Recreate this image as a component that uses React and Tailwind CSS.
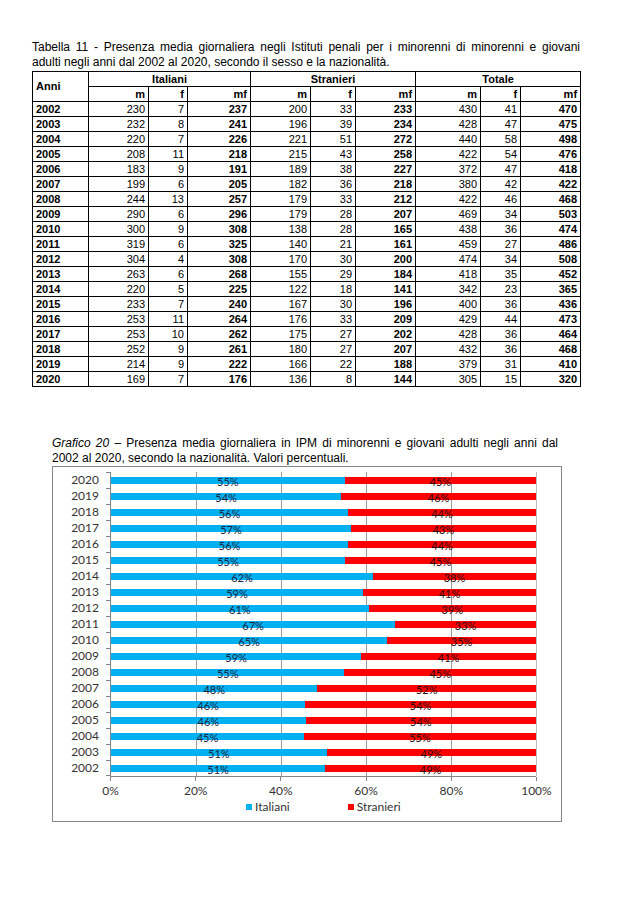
import React from "react";

const rows = [
  [2002, 230, 7, 237, 200, 33, 233, 430, 41, 470],
  [2003, 232, 8, 241, 196, 39, 234, 428, 47, 475],
  [2004, 220, 7, 226, 221, 51, 272, 440, 58, 498],
  [2005, 208, 11, 218, 215, 43, 258, 422, 54, 476],
  [2006, 183, 9, 191, 189, 38, 227, 372, 47, 418],
  [2007, 199, 6, 205, 182, 36, 218, 380, 42, 422],
  [2008, 244, 13, 257, 179, 33, 212, 422, 46, 468],
  [2009, 290, 6, 296, 179, 28, 207, 469, 34, 503],
  [2010, 300, 9, 308, 138, 28, 165, 438, 36, 474],
  [2011, 319, 6, 325, 140, 21, 161, 459, 27, 486],
  [2012, 304, 4, 308, 170, 30, 200, 474, 34, 508],
  [2013, 263, 6, 268, 155, 29, 184, 418, 35, 452],
  [2014, 220, 5, 225, 122, 18, 141, 342, 23, 365],
  [2015, 233, 7, 240, 167, 30, 196, 400, 36, 436],
  [2016, 253, 11, 264, 176, 33, 209, 429, 44, 473],
  [2017, 253, 10, 262, 175, 27, 202, 428, 36, 464],
  [2018, 252, 9, 261, 180, 27, 207, 432, 36, 468],
  [2019, 214, 9, 222, 166, 22, 188, 379, 31, 410],
  [2020, 169, 7, 176, 136, 8, 144, 305, 15, 320],
];

const labels = {
  2020: [55, 45], 2019: [54, 46], 2018: [56, 44], 2017: [57, 43], 2016: [56, 44],
  2015: [55, 45], 2014: [62, 38], 2013: [59, 41], 2012: [61, 39], 2011: [67, 33],
  2010: [65, 35], 2009: [59, 41], 2008: [55, 45], 2007: [48, 52], 2006: [46, 54],
  2005: [46, 54], 2004: [45, 55], 2003: [51, 49], 2002: [51, 49],
};

const colW = [56, 60, 39, 63, 60, 45, 60, 65, 40, 60];
const bold = [true, false, false, true, false, false, true, false, false, true];

function Table() {
  return (
    <table className="border-collapse table-fixed w-[548px] text-[11px] leading-[13px] text-black">
      <colgroup>
        {colW.map((w, i) => (
          <col key={i} style={{ width: w }} />
        ))}
      </colgroup>
      <thead>
        <tr className="h-[15px]">
          <th rowSpan={2} className="border border-black text-left font-bold px-[3px] py-0 align-middle">
            Anni
          </th>
          <th colSpan={3} className="border border-black text-center font-bold p-0">Italiani</th>
          <th colSpan={3} className="border border-black text-center font-bold p-0">Stranieri</th>
          <th colSpan={3} className="border border-black text-center font-bold p-0">Totale</th>
        </tr>
        <tr className="h-[15px]">
          {["m", "f", "mf", "m", "f", "mf", "m", "f", "mf"].map((h, i) => (
            <th key={i} className="border border-black text-right font-bold pr-[3px] py-0">
              {h}
            </th>
          ))}
        </tr>
      </thead>
      <tbody>
        {rows.map((r) => (
          <tr key={r[0]} className="h-[15px]">
            {r.map((v, i) => (
              <td
                key={i}
                className={
                  i === 0
                    ? "border border-black text-left font-bold px-[3px] py-0"
                    : bold[i]
                    ? "border border-black text-right font-bold pr-[3px] py-0"
                    : "border border-black text-right font-normal pr-[3px] py-0"
                }
              >
                {v}
              </td>
            ))}
          </tr>
        ))}
      </tbody>
    </table>
  );
}

function Chart() {
  const data = [...rows].reverse();
  return (
    <div className="w-[510px] h-[356px] border border-[#868686] bg-white pt-[5px] font-['Lato',sans-serif] text-[#262626]">
      <div className="flex">
        <div className="w-[57px] flex flex-col">
          {data.map((r, idx) => (
            <div key={r[0]} className="flex h-[16px]">
              <div className="flex-1 text-right pr-[7px] text-[12px] leading-[16px] text-[#333]">{r[0]}</div>
              <div
                className={
                  idx === data.length - 1
                    ? "w-[4px] h-full border-t border-b border-[#868686]"
                    : "w-[4px] h-full border-t border-[#868686]"
                }
              />
            </div>
          ))}
        </div>
        <div className="flex flex-col">
          <div className="relative w-[426px] h-[305px] border-l border-b border-[#868686]">
            <div className="absolute top-0 bottom-0 left-[85px] w-px bg-[#9a9a9a]" />
            <div className="absolute top-0 bottom-0 left-[170px] w-px bg-[#9a9a9a]" />
            <div className="absolute top-0 bottom-0 left-[255px] w-px bg-[#9a9a9a]" />
            <div className="absolute top-0 bottom-0 left-[340px] w-px bg-[#9a9a9a]" />
            <div className="absolute top-0 bottom-0 left-[425px] w-px bg-[#bdbdbd]" />
            <div className="relative flex flex-col">
              {data.map((r) => {
                const p = (r[3] / r[9]) * 100;
                const [li, ls] = labels[r[0]];
                return (
                  <div key={r[0]} className="h-[16px] flex items-center">
                    <div
                      className="h-[7px] bg-[#00b0f0] flex items-center justify-center"
                      style={{ width: `${p}%` }}
                    >
                      <span className="text-[11px] leading-none text-[#1c2540] whitespace-nowrap translate-y-[1px]">
                        {li}%
                      </span>
                    </div>
                    <div className="h-[7px] flex-1 bg-[#ff0000] flex items-center justify-center">
                      <span className="text-[11px] leading-none text-[#2a0a0a] whitespace-nowrap translate-y-[1px]">
                        {ls}%
                      </span>
                    </div>
                  </div>
                );
              })}
            </div>
          </div>
          <div className="w-[427px] flex justify-between h-[4px]">
            <div className="w-px h-full bg-[#868686]" />
            <div className="w-px h-full bg-[#868686]" />
            <div className="w-px h-full bg-[#868686]" />
            <div className="w-px h-full bg-[#868686]" />
            <div className="w-px h-full bg-[#868686]" />
            <div className="w-px h-full bg-[#868686]" />
          </div>
          <div className="w-[427px] flex justify-between mt-[3px]">
            {["0%", "20%", "40%", "60%", "80%", "100%"].map((t) => (
              <div key={t} className="w-px flex justify-center">
                <span className="text-[12px] leading-[14px] whitespace-nowrap text-[#333]">{t}</span>
              </div>
            ))}
          </div>
        </div>
      </div>
      <div className="flex items-center pl-[193px] mt-[2px] text-[12px] leading-[14px] text-[#333]">
        <div className="w-[6px] h-[6px] bg-[#00b0f0] mr-[3px]" />
        <span>Italiani</span>
        <div className="w-[6px] h-[6px] bg-[#ff0000] ml-[58px] mr-[3px]" />
        <span>Stranieri</span>
      </div>
    </div>
  );
}

export default function App() {
  return (
    <div className="w-[618px] h-[902px] bg-white font-['Liberation_Sans',Arial,sans-serif] text-black">
      <div className="pt-[40px] pl-[32px]">
        <div className="w-[548px] text-[12px] leading-[15px]">
          <div className="whitespace-nowrap text-justify [text-align-last:justify]">
            Tabella 11 - Presenza media giornaliera negli Istituti penali per i minorenni di minorenni e giovani
          </div>
          <div>adulti negli anni dal 2002 al 2020, secondo il sesso e la nazionalità.</div>
        </div>
        <div className="mt-[1px]">
          <Table />
        </div>
      </div>
      <div className="pl-[52px] mt-[49px]">
        <div className="w-[506px] text-[12px] leading-[15px]">
          <div className="whitespace-nowrap text-justify [text-align-last:justify]">
            <i>Grafico 20</i> – Presenza media giornaliera in IPM di minorenni e giovani adulti negli anni dal
          </div>
          <div>2002 al 2020, secondo la nazionalità. Valori percentuali.</div>
        </div>
        <Chart />
      </div>
    </div>
  );
}
